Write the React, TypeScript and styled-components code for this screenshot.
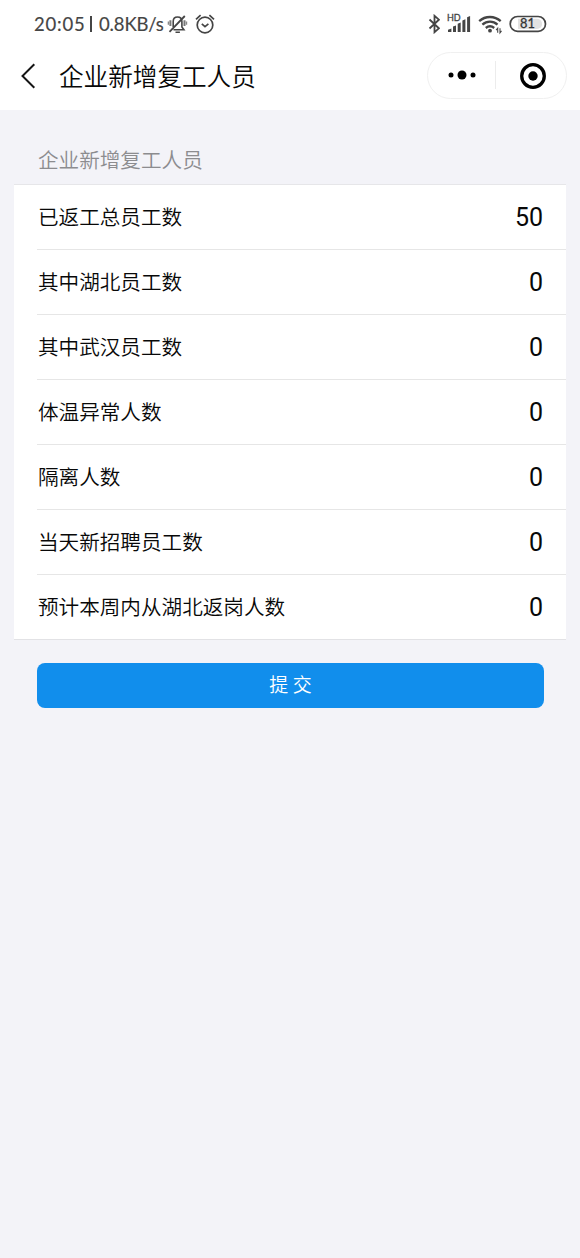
import React from "react";
import styled, { createGlobalStyle } from "styled-components";

const GlobalStyle = createGlobalStyle`
  * { box-sizing: border-box; }
  body {
    margin: 0;
    background: #f3f3f8;
    color: #080808;
    font-family: Roboto, "Noto Sans CJK SC", sans-serif;
  }
`;

const Screen = styled.main`
  min-height: 1258px;
  background: #f3f3f8;
`;

const StatusBar = styled.div`
  display: flex;
  justify-content: space-between;
  height: 46px;
  padding: 0 33px 0 34px;
  background: #fff;
  color: #454545;
`;

const StatusGroup = styled.div`
  display: flex;
  align-items: center;
  height: 48px;
`;

const StatusText = styled.span<{ $width: number; $spacing?: number }>`
  width: ${(p) => p.$width}px;
  font: 400 18.5px/24px Lato, sans-serif;
  letter-spacing: ${(p) => p.$spacing ?? 0}px;
  white-space: nowrap;
  -webkit-text-stroke: 0.15px #454545;
`;

const Bar = styled.i`
  width: 2px;
  height: 16px;
  margin-right: 7px;
  background: #454545;
`;

const NavBar = styled.header`
  display: flex;
  align-items: center;
  height: 64px;
  padding: 0 13px 0 20px;
  background: #fff;
`;

const BackButton = styled.button`
  display: flex;
  width: 39px;
  padding: 0 0 4px;
  border: 0;
  background: none;
`;

const Title = styled.h1`
  flex: 1;
  margin: 0;
  font-size: 24.6px;
  font-weight: 350;
  line-height: 36px;
`;

const Capsule = styled.div`
  display: flex;
  align-items: center;
  width: 140px;
  height: 47px;
  margin-top: -6px;
  border: 1px solid #f0f0f0;
  border-radius: 24px;
`;

const CapsuleHalf = styled.div<{ $divided?: boolean }>`
  display: flex;
  flex: 1 1 0;
  align-items: center;
  justify-content: center;
  height: 28px;
  padding: ${(p) => (p.$divided ? "1px 0 0 3px" : "0")};
  border-left: ${(p) => (p.$divided ? "1px solid #ececec" : "0")};
`;

const SectionTitle = styled.h2`
  margin: 0;
  padding: 36px 38px 7px;
  color: #8c8c8f;
  font-size: 20.6px;
  font-weight: 350;
  line-height: 31px;
`;

const List = styled.ul`
  margin: 0 14px;
  padding: 0 0 0 23px;
  border-top: 1px solid #e6e6e9;
  border-bottom: 1px solid #e2e2e5;
  background: #fff;
  list-style: none;
`;

const Row = styled.li`
  display: flex;
  align-items: center;
  justify-content: space-between;
  height: 65.05px;
  padding: 2px 23px 0 1px;
  &:first-child { height: 63.8px; }
  & + & { border-top: 1px solid #e6e6e6; }
`;

const Label = styled.span`
  font-size: 20.6px;
  font-weight: 350;
  line-height: 30px;
`;

const Value = styled.span`
  font-size: 25px;
  line-height: 30px;
`;

const SubmitButton = styled.button`
  display: block;
  width: 507px;
  height: 44.5px;
  margin: 23px 0 0 37px;
  padding: 1px 0 0;
  border: 0;
  border-radius: 8px;
  background: #118eec;
  color: #fff;
  font-family: inherit;
  font-size: 19px;
  font-weight: 350;
  line-height: 30px;
`;

const rows: [string, number][] = [
  ["已返工总员工数", 50],
  ["其中湖北员工数", 0],
  ["其中武汉员工数", 0],
  ["体温异常人数", 0],
  ["隔离人数", 0],
  ["当天新招聘员工数", 0],
  ["预计本周内从湖北返岗人数", 0],
];

const MutedBell = () => (
  <svg width="21" height="22" viewBox="0 0 21 22" fill="none" stroke="#454545" strokeWidth="1.6">
    <path d="M6.2 14V8.5C6.2 5.6 7.8 4 10.5 4s4.4 1.6 4.4 4.5V14l2 2.7H6.5M8.5 19.2h4.4" />
    <path d="M2.5 18.8 17.8 3" strokeWidth="1.8" />
    <path d="M3.4 7.3v5.6M17.5 7.3v5.6" stroke="#777" strokeWidth="2" />
    <path d="M1.4 8.5v3.2M19.5 8.5v3.2" stroke="#888" strokeWidth="1.4" />
  </svg>
);

const AlarmClock = () => (
  <svg width="20" height="22" viewBox="0 0 20 22" fill="none" stroke="#454545" strokeWidth="1.7">
    <circle cx="10" cy="12" r="7.8" />
    <path d="m1 6.4 4.6-4.2M19 6.4l-4.6-4.2M6.8 10.8l3.2 2.8 3.4-2.8" />
  </svg>
);

const Bluetooth = () => (
  <svg width="12" height="20" viewBox="0 0 12 20" fill="none" stroke="#454545" strokeWidth="1.8">
    <path d="m1.5 5.5 9.4 8.8-4.4 3.9V1.8l4.4 3.9-9.4 8.8" />
  </svg>
);

const HdSignal = () => (
  <svg width="24" height="22" viewBox="0 0 24 22" fill="#454545">
    <text x="0" y="8" fontFamily="Lato, sans-serif" fontSize="9" stroke="#454545" strokeWidth="0.3">HD</text>
    <path d="M1 19v-2.2l3.4-1.4V19zM6 19v-5.4l3-1.2V19zM10.7 19V10.8l3-1.3V19zM15.4 19V7.5l3-1.3V19zM20.1 19V4.2L23.1 3v16z" />
  </svg>
);

const Wifi = () => (
  <svg width="24" height="22" viewBox="0 0 24 22" fill="none" stroke="#454545" strokeWidth="2.3">
    <path d="M1.2 8.2c6.2-5.6 15.4-5.6 21.5 0M4.4 11.7c4.5-4 10.7-4 15.1 0M7.8 15c2.5-2.1 5.9-2.1 8.4 0" />
    <circle cx="12" cy="17.7" r="1.9" fill="#454545" stroke="none" />
    <path d="M19.7 19.8v-4.6l-1.6 2M22 15.2v4.6l1.5-2" strokeWidth="1.1" />
  </svg>
);

const Battery = () => (
  <svg width="38" height="18" viewBox="0 0 38 18">
    <rect x="1.2" y="1.5" width="35.3" height="14.8" rx="7.4" fill="#fff" stroke="#454545" strokeWidth="1.7" />
    <path d="M9 3.8h19a5.1 5.1 0 0 1 0 10.2H9z" fill="#e2e2e2" />
    <text x="18.4" y="13.3" textAnchor="middle" fill="#333" stroke="#333" strokeWidth="0.3" fontFamily="Lato, sans-serif" fontSize="12.8">81</text>
  </svg>
);

const BackIcon = () => (
  <svg width="18" height="26" viewBox="0 0 18 26" fill="none" stroke="#151515" strokeWidth="2">
    <path d="M14.3 1.3 2.5 13l11.8 11.8" />
  </svg>
);

const MoreIcon = () => (
  <svg width="28" height="10" viewBox="0 0 28 10">
    <circle cx="3" cy="5" r="2.5" />
    <circle cx="14" cy="5" r="4.5" />
    <circle cx="25" cy="5" r="2.5" />
  </svg>
);

const CloseIcon = () => (
  <svg width="28" height="28" viewBox="0 0 28 28">
    <circle cx="14" cy="14" r="11.3" fill="none" stroke="#000" strokeWidth="3.3" />
    <circle cx="14" cy="14" r="4.7" />
  </svg>
);

const RightIcons = styled(StatusGroup)`
  gap: 7px;
`;

const AlertIcons = styled.div`
  display: flex;
  gap: 6.5px;
`;

export default function App() {
  return (
    <Screen>
      <GlobalStyle />
      <StatusBar>
        <StatusGroup>
          <StatusText $width={56} $spacing={0.8}>20:05</StatusText>
          <Bar />
          <StatusText $width={68} $spacing={-0.15}>0.8KB/s</StatusText>
          <AlertIcons>
            <MutedBell />
            <AlarmClock />
          </AlertIcons>
        </StatusGroup>
        <RightIcons>
          <Bluetooth />
          <HdSignal />
          <Wifi />
          <Battery />
        </RightIcons>
      </StatusBar>
      <NavBar>
        <BackButton aria-label="返回"><BackIcon /></BackButton>
        <Title>企业新增复工人员</Title>
        <Capsule>
          <CapsuleHalf><MoreIcon /></CapsuleHalf>
          <CapsuleHalf $divided><CloseIcon /></CapsuleHalf>
        </Capsule>
      </NavBar>
      <SectionTitle>企业新增复工人员</SectionTitle>
      <List>
        {rows.map(([label, value]) => (
          <Row key={label}>
            <Label>{label}</Label>
            <Value>{value}</Value>
          </Row>
        ))}
      </List>
      <SubmitButton>提 交</SubmitButton>
    </Screen>
  );
}
